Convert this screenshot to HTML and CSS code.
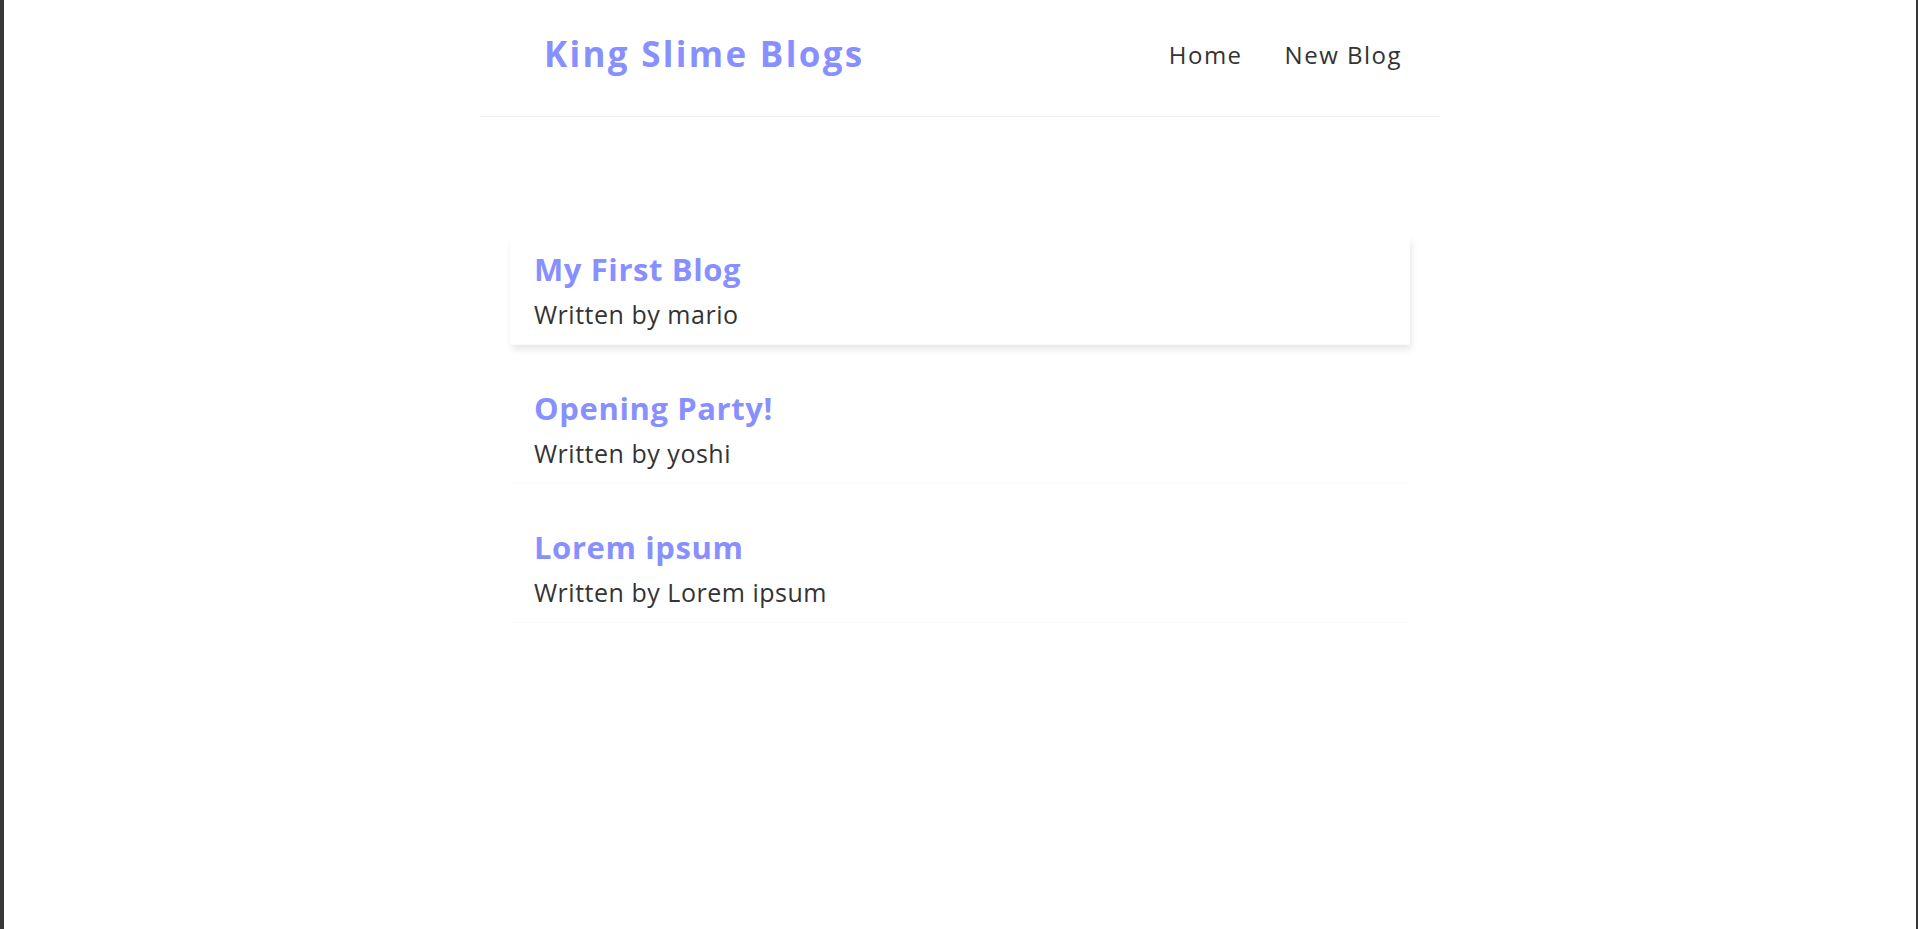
FILE: index.html
```html
<!DOCTYPE html>
<html lang="en">
<head>
<meta charset="utf-8">
<title>King Slime Blogs</title>
<link rel="stylesheet" href="styles.css">
</head>
<body>
<div class="app">
  <nav class="navbar">
    <h1 class="brand">King Slime Blogs</h1>
    <div class="links">
      <a href="#" class="link">Home</a>
      <a href="#" class="link">New Blog</a>
    </div>
  </nav>
  <main class="content">
    <div class="blog-preview is-hover">
      <h2 class="blog-title">My First Blog</h2>
      <p class="blog-author">Written by mario</p>
    </div>
    <div class="blog-preview">
      <h2 class="blog-title">Opening Party!</h2>
      <p class="blog-author">Written by yoshi</p>
    </div>
    <div class="blog-preview">
      <h2 class="blog-title">Lorem ipsum</h2>
      <p class="blog-author">Written by Lorem ipsum</p>
    </div>
  </main>
</div>
</body>
</html>
```

FILE: styles.css
```css
* {
  margin: 0;
  box-sizing: border-box;
}

html, body {
  height: 100%;
}

body {
  background: #ffffff;
  border-left: 4px solid #383838;
  border-right: 2px solid #383838;
  font-family: "Open Sans", "Liberation Sans", sans-serif;
  color: #333333;
}

.navbar {
  max-width: 960px;
  margin: 0 auto;
  padding: 23px 29px 32px 64px;
  display: flex;
  align-items: center;
  border-bottom: 1px solid #f2f2f2;
}

.brand {
  font-size: 35px;
  line-height: 61px;
  font-weight: 700;
  color: #8890ff;
  letter-spacing: 2.3px;
}

.links {
  margin-left: auto;
  display: flex;
}

.link {
  margin-left: 24px;
  padding: 10px 9px 8px;
  text-decoration: none;
  color: #333333;
  font-size: 24px;
  line-height: 32px;
  letter-spacing: 1.5px;
}

.content {
  max-width: 960px;
  margin: 0 auto;
  padding: 119px 30px 30px;
  display: flex;
  flex-direction: column;
  gap: 30px;
}

.blog-preview {
  padding: 13px 24px 14px;
  border-bottom: 1px solid #fafafa;
  display: flex;
  flex-direction: column;
  gap: 9px;
}

.blog-preview.is-hover {
  box-shadow: 1.5px 4.5px 7.5px rgba(0, 0, 0, 0.1);
}

.blog-title {
  font-size: 31px;
  line-height: 40px;
  font-weight: 700;
  color: #8890ff;
  letter-spacing: 0.6px;
}

.blog-author {
  font-size: 25px;
  line-height: 32px;
  letter-spacing: 0.52px;
}
```
